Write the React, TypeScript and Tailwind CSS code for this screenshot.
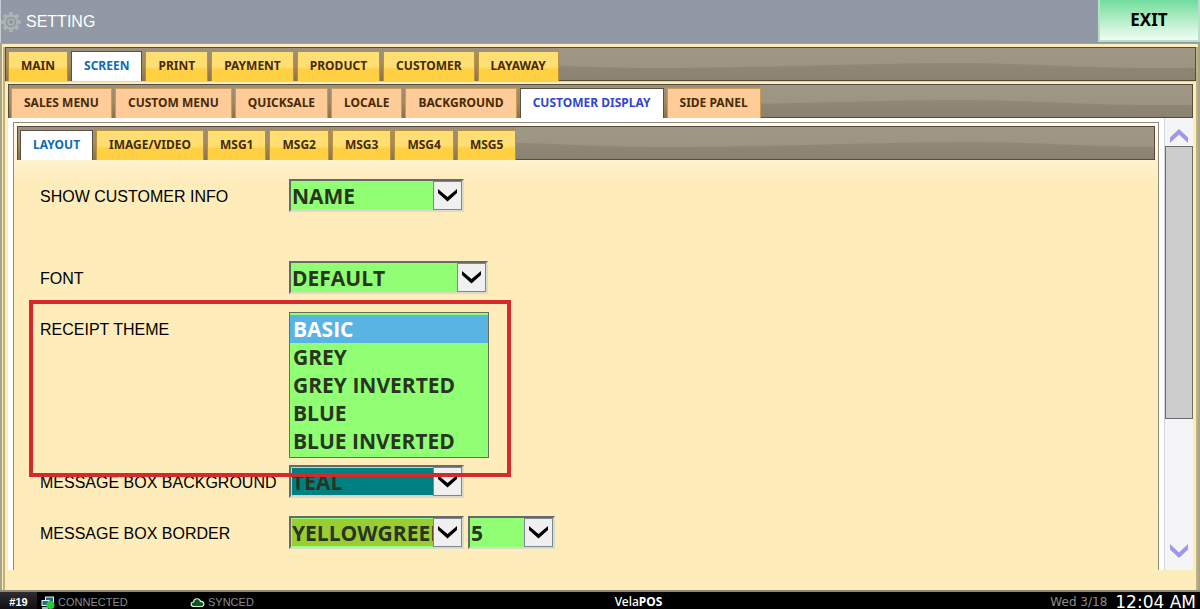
import React, { useId, useState } from "react";
import clsx from "clsx";

const MAIN_TABS = ["MAIN", "SCREEN", "PRINT", "PAYMENT", "PRODUCT", "CUSTOMER", "LAYAWAY"];
const SCREEN_TABS = [
  "SALES MENU",
  "CUSTOM MENU",
  "QUICKSALE",
  "LOCALE",
  "BACKGROUND",
  "CUSTOMER DISPLAY",
  "SIDE PANEL",
];
const DISPLAY_TABS = ["LAYOUT", "IMAGE/VIDEO", "MSG1", "MSG2", "MSG3", "MSG4", "MSG5"];

const THEMES = ["BASIC", "GREY", "GREY INVERTED", "BLUE", "BLUE INVERTED"];

type TabBarProps = {
  label: string;
  tabs: string[];
  initial: string;
  tone?: "yellow" | "peach";
};

const TabBar = ({ label, tabs, initial, tone = "yellow" }: TabBarProps) => {
  const [active, setActive] = useState(initial);
  const waveId = useId();

  return (
    <div className="relative h-[34px] shrink-0 border border-[#554c3e] bg-linear-to-b from-[#a09887] to-[#9a9181]">
      {/* Wave texture */}
      <svg className="absolute inset-0 h-full w-full" aria-hidden="true">
        <defs>
          <linearGradient id={`${waveId}-fill`} x1="0" y1="0" x2="0" y2="1">
            <stop offset="0" stopColor="#918876" />
            <stop offset="1" stopColor="#898170" />
          </linearGradient>
          <pattern id={waveId} width="500" height="34" patternUnits="userSpaceOnUse" x="-50">
            <path d="M0 15 C70 15 120 20 200 20 C300 20 420 15 500 15 V34 H0 Z" fill={`url(#${waveId}-fill)`} />
          </pattern>
        </defs>
        <rect width="100%" height="100%" fill={`url(#${waveId})`} />
      </svg>
      <div role="tablist" aria-label={label} className="relative flex h-[33px] w-max gap-[3px] bg-linear-to-b from-[#9b9080] via-[#a58a5c] to-[#8b754c] pl-[2px] pt-[3px]">
        {tabs.map((tab) => (
          <button
            key={tab}
            role="tab"
            type="button"
            aria-selected={tab === active}
            onClick={() => setActive(tab)}
            className={clsx(
              "border-x border-t px-3 pb-px font-['Noto_Sans',sans-serif] text-[12px] leading-none font-bold whitespace-nowrap",
              tab === active && "border-[#5a5142] bg-white",
              tab === active && (tone === "peach" ? "text-[#3346cc]" : "text-[#0b6cb3]"),
              tab !== active && "text-[#472a06]",
              tab !== active && tone === "yellow" && "border-[#b8923c] bg-linear-to-b from-[#ffdf74] from-50% to-[#ffd142] to-60%",
              tab !== active && tone === "peach" && "border-[#c89a52] bg-[#ffcc99]"
            )}
          >
            {tab}
          </button>
        ))}
      </div>
    </div>
  );
};

type DropDownProps = {
  id: string;
  options: string[];
  width: string;
  fill?: string;
  label?: string;
};

const DropDown = ({ id, options, width, fill = "bg-[#90ff73]", label }: DropDownProps) => (
  <div className={clsx("relative h-[33px] border-2 border-t-[#696969] border-l-[#696969] border-r-[#d9dccb] border-b-[#d9dccb] bg-[#90ff73] p-px", width)}>
    <select
      id={id}
      aria-label={label}
      className={clsx("h-full w-full appearance-none pt-px font-['Open_Sans',sans-serif] text-[21px] leading-none font-bold text-[#2a3420]", fill)}
    >
      {options.map((option) => (
        <option key={option}>{option}</option>
      ))}
    </select>
    <span className="pointer-events-none absolute top-0 right-0 flex h-full w-[29px] items-center justify-center border border-[#7d8790] bg-[#f0f0f0]">
      <svg width="19" height="13" viewBox="0 0 19 13" aria-hidden="true">
        <path d="M0 0 L9.500 8 L19 0 V4 L9.500 12.500 L0 4 Z" fill="#000" />
      </svg>
    </span>
  </div>
);

const FieldLabel = ({ htmlFor, children }: { htmlFor: string; children: React.ReactNode }) => (
  <label htmlFor={htmlFor} className="w-[249px] shrink-0 text-[16px] leading-[36px] text-black">
    {children}
  </label>
);

const App = () => {
  return (
    <div className="flex h-screen flex-col overflow-hidden bg-[#feecbb] font-['Liberation_Sans',sans-serif]">
      {/* Title bar */}
      <header className="flex h-[43px] shrink-0 items-stretch justify-between border-l border-[#c9ccd0] bg-[#9299a6]">
        <div className="flex items-center gap-[5px] text-white">
          <svg width="20" height="20" viewBox="0 0 20 20" aria-hidden="true">
            <g fill="#aab5b3">
              {[0, 45, 90, 135].map((angle) => (
                <rect key={angle} x="8" y="0" width="4" height="20" rx="1" transform={`rotate(${angle} 10 10)`} />
              ))}
            </g>
            <circle cx="10" cy="10" r="7.500" fill="#aab5b3" />
            <circle cx="10" cy="10" r="4.500" fill="none" stroke="#8b9798" strokeWidth="1.500" />
            <circle cx="10" cy="10" r="2" fill="#8d989d" />
          </svg>
          <h1 className="text-[16px]">SETTING</h1>
        </div>
        <button type="button" className="mb-px w-[102px] border-x-2 border-b-2 border-[#b8dfc9] bg-linear-to-b from-[#6fdc9c] to-[#effdf4] font-['Noto_Sans',sans-serif] text-[17px] font-bold text-black">
          EXIT
        </button>
      </header>

      {/* Settings panel */}
      <main className="flex min-h-0 flex-1 flex-col border-x-2 border-t border-[#a7a48c] pt-[3px] pl-px">
        <div className="flex min-h-0 flex-1 flex-col border-x-2 border-[#c0b27c]">
          <TabBar label="Settings" tabs={MAIN_TABS} initial="SCREEN" />
          <div className="flex min-h-0 flex-1 flex-col border-t border-[#d9d2b8] px-[3px] pt-[2px] pb-5">
            <TabBar label="Screen" tabs={SCREEN_TABS} initial="CUSTOMER DISPLAY" tone="peach" />
            <div className="flex min-h-0 flex-1 bg-white">
              <div className="mt-1 mr-[5px] ml-[5px] min-w-0 flex-1 overflow-hidden border-x border-t border-[#8f8b78] bg-linear-to-b from-[#fffaf0] to-[#feecbb] to-[60px] p-[3px]">
                <TabBar label="Customer display" tabs={DISPLAY_TABS} initial="LAYOUT" />

                {/* Layout form */}
                <form className="pt-[19px] pl-[23px]">
                  <div className="mb-[46px] flex">
                    <FieldLabel htmlFor="customer-info">SHOW CUSTOMER INFO</FieldLabel>
                    <DropDown id="customer-info" options={["NAME"]} width="w-[175px]" />
                  </div>
                  <div className="mb-[15px] flex">
                    <FieldLabel htmlFor="font">FONT</FieldLabel>
                    <DropDown id="font" options={["DEFAULT"]} width="w-[199px]" />
                  </div>
                  <div className="relative mb-[7px] flex">
                    <FieldLabel htmlFor="theme">RECEIPT THEME</FieldLabel>
                    <select
                      id="theme"
                      size={5}
                      defaultValue="BASIC"
                      className="h-[146px] w-[200px] appearance-none overflow-hidden border border-[#64705a] bg-[#90ff73] py-[2px] text-[#2a3420]"
                    >
                      {THEMES.map((theme) => (
                        <option
                          key={theme}
                          className="h-7 px-[3px] py-0 font-['Open_Sans',sans-serif] text-[21px] leading-7 font-bold checked:bg-linear-to-b checked:from-[#5ab4e3] checked:to-[#5ab4e3] checked:[-webkit-text-fill-color:white]"
                        >
                          {theme}
                        </option>
                      ))}
                    </select>
                    {/* Highlight frame */}
                    <div className="pointer-events-none absolute -top-3 -left-[11px] z-10 h-[177px] w-[482px] border-4 border-[#d42a2c]" />
                  </div>
                  <div className="mb-[15px] flex">
                    <FieldLabel htmlFor="box-background">MESSAGE BOX BACKGROUND</FieldLabel>
                    <DropDown id="box-background" options={["TEAL"]} width="w-[175px]" fill="bg-[#008080]" />
                  </div>
                  <div className="flex">
                    <FieldLabel htmlFor="box-border">MESSAGE BOX BORDER</FieldLabel>
                    <div className="flex gap-1">
                      <DropDown id="box-border" options={["YELLOWGREEN"]} width="w-[175px]" fill="bg-[#9acd32]" />
                      <DropDown id="box-border-size" label="Border size" options={["5"]} width="w-[87px]" />
                    </div>
                  </div>
                </form>
              </div>

              {/* Scroll bar */}
              <div className="flex w-[29px] flex-col border-l border-[#d4d4dc] bg-[#f5f5f7]">
                <button type="button" aria-label="Scroll up" className="flex h-[28px] items-center justify-center pt-2">
                  <svg width="18" height="14" viewBox="0 0 18 14" aria-hidden="true">
                    <path d="M0 8.500 L9 0 L18 8.500 V14 L9 5.500 L0 14 Z" fill="#9e98ea" />
                  </svg>
                </button>
                <div className="h-[273px] border border-[#6c6c6c] bg-[#cdcdcd]" />
                <button type="button" aria-label="Scroll down" className="mt-auto flex h-[38px] items-center justify-center">
                  <svg width="18" height="14" viewBox="0 0 18 14" aria-hidden="true">
                    <path d="M0 0 L9 8.500 L18 0 V5.500 L9 14 L0 5.500 Z" fill="#9e98ea" />
                  </svg>
                </button>
              </div>
            </div>
          </div>
        </div>
      </main>

      {/* Status bar */}
      <footer className="grid h-[19px] shrink-0 grid-cols-[1fr_auto_1fr] items-center border-t-2 border-[#8b8c78] bg-black text-[11px] leading-[13px] text-[#8c8c8c]">
        <div className="flex items-center">
          <span className="flex h-[17px] w-[37px] items-center justify-center bg-linear-to-b from-[#2c2c32] to-[#111114] pt-[3px] font-bold text-white">#19</span>
          <span className="flex w-[149px] items-center gap-[3px] pt-[3px] pl-1">
            <svg width="14" height="13" viewBox="0 0 14 13" aria-hidden="true">
              <rect x="4.500" y="1" width="8" height="6" fill="#1c6f86" stroke="#e8f4f4" />
              <rect x="1" y="4.500" width="7" height="5" fill="#1c6f86" stroke="#e8f4f4" />
              <path d="M1 12 H7" stroke="#e8f4f4" strokeWidth="1.500" />
              <circle cx="9.500" cy="9" r="4" fill="#24cc35" />
            </svg>
            CONNECTED
          </span>
          <span className="flex items-center gap-[3px] pt-[3px] pl-1">
            <svg width="15" height="11" viewBox="0 0 15 11" aria-hidden="true">
              <path d="M4 9.500 C0.500 9.500 0 5.500 3.500 5 C4 1 9.500 0.500 10.500 4.500 C14.500 4 15 9.500 11.500 9.500 Z" fill="#0c5a20" stroke="#d8f0dc" strokeWidth="1.200" />
            </svg>
            SYNCED
          </span>
        </div>
        <span className="pt-px pl-[77px] font-['Noto_Sans',sans-serif] text-[12px] font-medium text-white">
          Vela<b>POS</b>
        </span>
        <div className="flex items-center justify-end gap-2 pt-[3px] pr-1 font-['DejaVu_Sans',sans-serif]">
          <span className="text-[12px]">Wed 3/18</span>
          <span className="text-[17px] text-white">12:04 AM</span>
        </div>
      </footer>
    </div>
  );
};

export default App;
